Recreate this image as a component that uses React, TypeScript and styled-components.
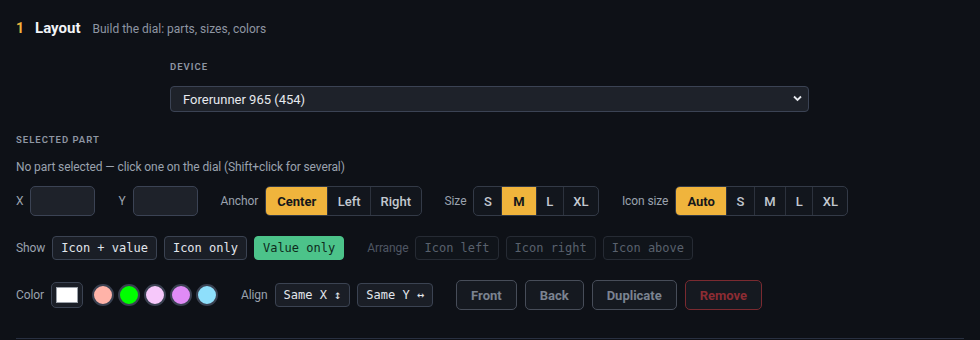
import React from 'react';
import styled, { createGlobalStyle } from 'styled-components';

const GlobalStyle = createGlobalStyle`
  html, body {
    margin: 0;
    padding: 0;
    background: #0e1117;
  }
  body {
    font-family: Roboto, 'Noto Sans', sans-serif;
    color: #e4e7ec;
  }
`;

// --- section wrapper ---
const Section = styled.section`
  padding: 16px 16px 0;
  width: 980px;
  height: 340px;
  box-sizing: border-box;
`;

const Header = styled.div`
  display: flex;
  align-items: baseline;
  gap: 11px;
  height: 24px;
  line-height: 24px;
`;

const StepNo = styled.span`
  color: #f0b43c;
  font-weight: 700;
  font-size: 14px;
`;

const Title = styled.h2`
  margin: 0;
  font-size: 15px;
  font-weight: 700;
  color: #f2f4f7;
`;

const Subtitle = styled.span`
  font-size: 12px;
  color: #8e96a3;
  margin-left: 1px;
`;

const DeviceBlock = styled.div`
  margin: 21px 0 0 154px;
  width: 639px;
`;

const SmallCaps = styled.div<{ $mt?: number; $mb?: number }>`
  font-size: 9.5px;
  font-weight: 600;
  letter-spacing: 1px;
  text-transform: uppercase;
  color: #8e96a3;
  line-height: 12px;
  margin-top: ${(p) => p.$mt ?? 0}px;
  margin-bottom: ${(p) => p.$mb ?? 0}px;
`;

const SelectWrap = styled.div`
  position: relative;
  height: 26px;
`;

const Select = styled.select`
  appearance: none;
  width: 100%;
  height: 26px;
  box-sizing: border-box;
  background: #1e222a;
  border: 1px solid #3b4354;
  border-radius: 4px;
  color: #e6e9ee;
  font-family: Roboto, sans-serif;
  font-size: 13px;
  padding: 0 12px;
  outline: none;
`;

const Chevron = styled.svg`
  position: absolute;
  right: 7px;
  top: 9px;
  pointer-events: none;
`;

const Hint = styled.div`
  margin-top: 13px;
  font-size: 12px;
  letter-spacing: -0.1px;
  line-height: 16px;
  color: #9aa2ae;
`;

const Row = styled.div<{ $mt: number }>`
  display: flex;
  align-items: center;
  gap: 23px;
  margin-top: ${(p) => p.$mt}px;
`;

const Field = styled.div`
  display: flex;
  align-items: center;
  gap: 7px;
`;

const Label = styled.span<{ $dim?: boolean }>`
  font-size: 12px;
  letter-spacing: -0.1px;
  color: ${(p) => (p.$dim ? '#4e5663' : '#9aa2ae')};
`;

const NumInput = styled.input`
  width: 65px;
  height: 30px;
  box-sizing: border-box;
  background: #1e222a;
  border: 1px solid #3b4354;
  border-radius: 5px;
  color: #e6e9ee;
  outline: none;
`;

const Segmented = styled.div`
  display: flex;
  height: 30px;
  box-sizing: border-box;
  border: 1px solid #333a47;
  border-radius: 5px;
  overflow: hidden;
  background: #12161d;
`;

const SegButton = styled.button<{ $active?: boolean }>`
  border: none;
  border-left: 1px solid #2c323d;
  &:first-child { border-left: none; }
  padding: 0 ${(p) => (p.$active ? 11 : 9.5)}px;
  background: ${(p) => (p.$active ? '#f0b43c' : 'transparent')};
  color: ${(p) => (p.$active ? '#15171b' : '#c3c8d0')};
  font-family: Roboto, sans-serif;
  font-size: 13px;
  font-weight: ${(p) => (p.$active ? 700 : 500)};
  cursor: pointer;
`;

type Tone = 'normal' | 'active' | 'disabled';

const MonoButton = styled.button<{ $tone?: Tone }>`
  height: 24px;
  box-sizing: border-box;
  padding: 0 8px;
  border-radius: 4px;
  font-family: 'DejaVu Sans Mono', 'Liberation Mono', monospace;
  font-size: 12px;
  border: 1px solid
    ${(p) => (p.$tone === 'active' ? '#4cc38a' : p.$tone === 'disabled' ? '#262b34' : '#3b4352')};
  background: ${(p) => (p.$tone === 'active' ? '#4cc38a' : p.$tone === 'disabled' ? '#10141a' : '#1a1e26')};
  color: ${(p) => (p.$tone === 'active' ? '#0e2a1b' : p.$tone === 'disabled' ? '#59616d' : '#e2e6ec')};
`;

const ButtonGroup = styled.div`
  display: flex;
  gap: 7px;
`;

const Swatch = styled.button`
  width: 32px;
  height: 26px;
  box-sizing: border-box;
  padding: 4px;
  background: #1a1e26;
  border: 1px solid #3b4352;
  border-radius: 5px;
  display: flex;
`;

const SwatchFill = styled.span`
  flex: 1;
  background: #ffffff;
  border: 1px solid #9aa0a8;
`;

const Dots = styled.div`
  display: flex;
  gap: 4px;
  margin-left: 2px;
`;

const Dot = styled.span<{ $c: string }>`
  width: 22px;
  height: 22px;
  box-sizing: border-box;
  border-radius: 50%;
  border: 2px solid #394050;
  background: ${(p) => p.$c};
`;

const Actions = styled.div`
  display: flex;
  gap: 8px;
`;

const ActionButton = styled.button<{ $danger?: boolean }>`
  height: 30px;
  box-sizing: border-box;
  padding: 0 14px;
  border-radius: 5px;
  background: #151920;
  border: 1.5px solid ${(p) => (p.$danger ? '#7a2a30' : '#474d59')};
  color: ${(p) => (p.$danger ? '#8c2c33' : '#7b8390')};
  font-family: Roboto, sans-serif;
  font-size: 13px;
  font-weight: 700;
`;

const Divider = styled.hr`
  margin: 28px 0 0;
  border: none;
  border-top: 1px solid #283041;
`;

const swatches = ['#ffb3a8', '#00ff00', '#f6c8fa', '#e08bf6', '#8edffb'];

const App: React.FC = () => {
  return (
    <>
      <GlobalStyle />
      <Section>
        <Header>
          <StepNo>1</StepNo>
          <Title>Layout</Title>
          <Subtitle>Build the dial: parts, sizes, colors</Subtitle>
        </Header>

        <DeviceBlock>
          <SmallCaps $mb={13}>Device</SmallCaps>
          <SelectWrap>
            <Select defaultValue="fr965">
              <option value="fr965">Forerunner 965 (454)</option>
            </Select>
            <Chevron width="9" height="7" viewBox="0 0 9 7">
              <path d="M1 1.5 L4.5 5 L8 1.5" fill="none" stroke="#e6e9ee" strokeWidth="1.8" />
            </Chevron>
          </SelectWrap>
        </DeviceBlock>

        <SmallCaps $mt={22}>Selected part</SmallCaps>
        <Hint>No part selected — click one on the dial (Shift+click for several)</Hint>

        <Row $mt={11}>
          <Field>
            <Label>X</Label>
            <NumInput />
          </Field>
          <Field>
            <Label>Y</Label>
            <NumInput />
          </Field>
          <Field>
            <Label>Anchor</Label>
            <Segmented>
              <SegButton $active>Center</SegButton>
              <SegButton>Left</SegButton>
              <SegButton>Right</SegButton>
            </Segmented>
          </Field>
          <Field>
            <Label>Size</Label>
            <Segmented>
              <SegButton>S</SegButton>
              <SegButton $active>M</SegButton>
              <SegButton>L</SegButton>
              <SegButton>XL</SegButton>
            </Segmented>
          </Field>
          <Field>
            <Label>Icon size</Label>
            <Segmented>
              <SegButton $active>Auto</SegButton>
              <SegButton>S</SegButton>
              <SegButton>M</SegButton>
              <SegButton>L</SegButton>
              <SegButton>XL</SegButton>
            </Segmented>
          </Field>
        </Row>

        <Row $mt={20}>
          <Field>
            <Label>Show</Label>
            <ButtonGroup>
              <MonoButton>Icon + value</MonoButton>
              <MonoButton>Icon only</MonoButton>
              <MonoButton $tone="active">Value only</MonoButton>
            </ButtonGroup>
          </Field>
          <Field>
            <Label $dim>Arrange</Label>
            <ButtonGroup>
              <MonoButton $tone="disabled">Icon left</MonoButton>
              <MonoButton $tone="disabled">Icon right</MonoButton>
              <MonoButton $tone="disabled">Icon above</MonoButton>
            </ButtonGroup>
          </Field>
        </Row>

        <Row $mt={20}>
          <Field>
            <Label>Color</Label>
            <Swatch>
              <SwatchFill />
            </Swatch>
            <Dots>
              {swatches.map((c) => (
                <Dot key={c} $c={c} />
              ))}
            </Dots>
          </Field>
          <Field>
            <Label>Align</Label>
            <ButtonGroup>
              <MonoButton>Same X ↕</MonoButton>
              <MonoButton>Same Y ↔</MonoButton>
            </ButtonGroup>
          </Field>
          <Actions>
            <ActionButton>Front</ActionButton>
            <ActionButton>Back</ActionButton>
            <ActionButton>Duplicate</ActionButton>
            <ActionButton $danger>Remove</ActionButton>
          </Actions>
        </Row>

        <Divider />
      </Section>
    </>
  );
};

export default App;
